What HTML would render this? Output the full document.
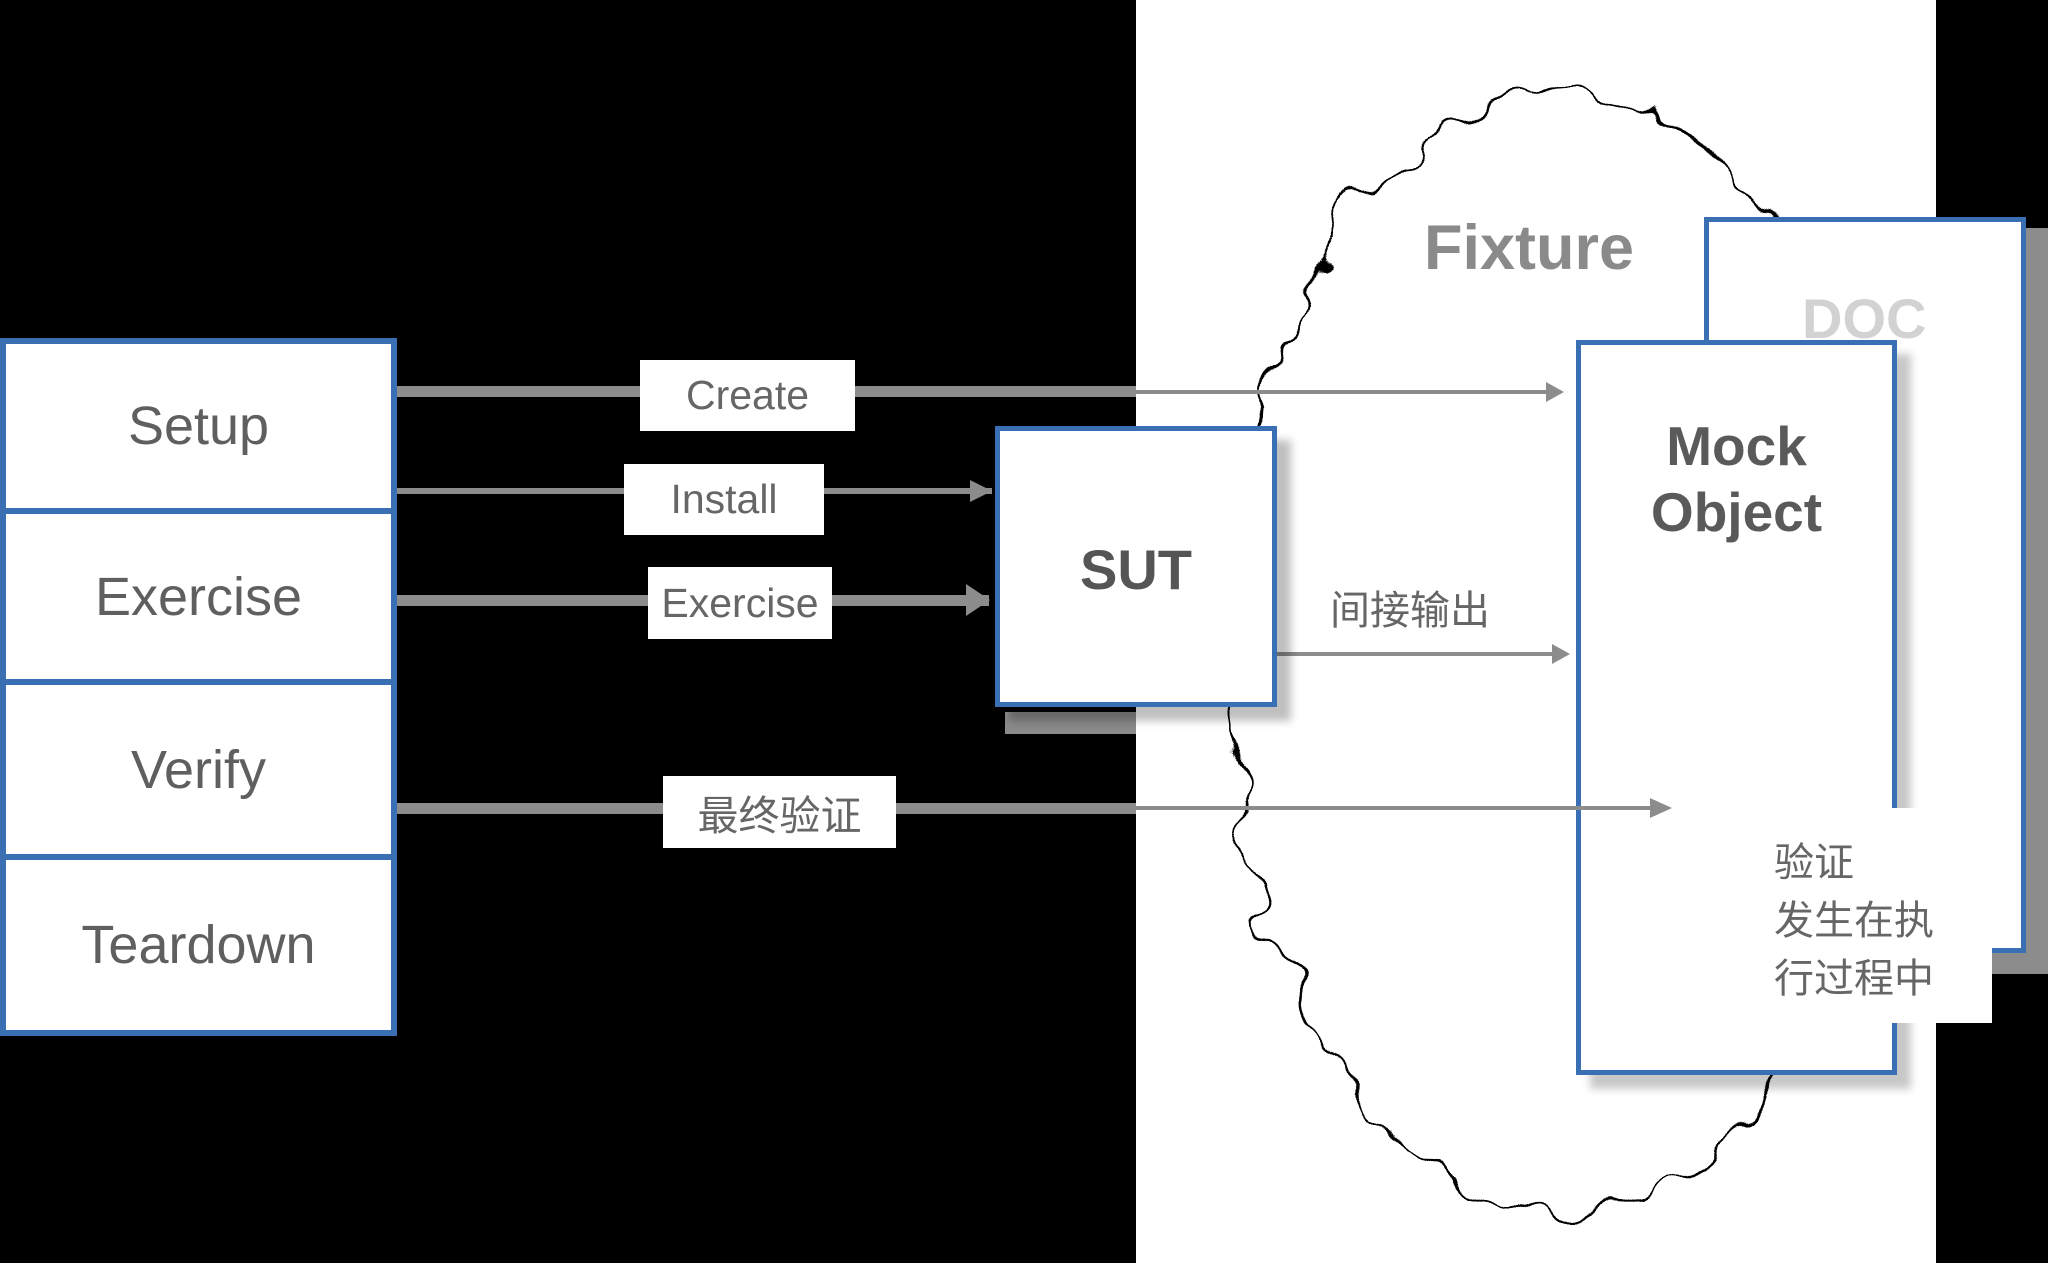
<!DOCTYPE html>
<html><head><meta charset="utf-8"><style>
body{margin:0;width:2048px;height:1263px;background:#000;position:relative;overflow:hidden;font-family:"Liberation Sans","Noto Sans CJK SC",sans-serif;}
.a{position:absolute;}
.lbl{position:absolute;background:#fff;color:#666;display:flex;align-items:center;justify-content:center;}
.cell{position:absolute;left:0;width:397px;background:#fff;color:#5f5f5f;font-size:54px;display:flex;align-items:center;justify-content:center;box-sizing:border-box;}
</style></head><body>
<div class="a" style="left:1136px;top:0;width:800px;height:1263px;background:#fff"></div>
<svg class="a" style="left:0;top:0" width="2048" height="1263">
<defs>
<filter id="w" x="-20%" y="-20%" width="140%" height="140%">
<feTurbulence type="fractalNoise" baseFrequency="0.022" numOctaves="2" seed="7"/>
<feDisplacementMap in="SourceGraphic" scale="60" xChannelSelector="R" yChannelSelector="G"/>
</filter>
</defs>
<ellipse cx="1560" cy="650" rx="330" ry="560" fill="none" stroke="#000" stroke-width="3" filter="url(#w)"/>
</svg>
<!-- left box -->
<div class="a" style="left:0;top:338px;width:397px;height:698px;background:#3a70b3"></div>
<div class="cell" style="top:344px;height:164px;left:6px;width:385px">Setup</div>
<div class="cell" style="top:514px;height:165px;left:6px;width:385px">Exercise</div>
<div class="cell" style="top:685px;height:169px;left:6px;width:385px">Verify</div>
<div class="cell" style="top:860px;height:170px;left:6px;width:385px">Teardown</div>
<svg class="a" style="left:0;top:0" width="2048" height="1263">
<g fill="#8c8c8c">
<rect x="397" y="386" width="739" height="11"/>
<rect x="1136" y="390" width="420" height="4"/>
<polygon points="1546,382 1564,392 1546,402"/>
<rect x="397" y="488" width="595" height="6"/>
<polygon points="970,480 992,491 970,502"/>
<rect x="397" y="595" width="592" height="11"/>
<polygon points="966,584 990,600 966,616"/>
<rect x="397" y="803" width="739" height="11"/>
<rect x="1136" y="806" width="530" height="4"/>
<rect x="1277" y="652" width="278" height="4"/>
<polygon points="1552,644 1570,654 1552,664"/>
</g>
<rect x="1005" y="712" width="131" height="22" fill="#8a8a8a"/>
</svg>
<div class="lbl" style="left:640px;top:360px;width:215px;height:71px;font-size:41px">Create</div>
<div class="lbl" style="left:624px;top:464px;width:200px;height:71px;font-size:41px">Install</div>
<div class="lbl" style="left:648px;top:567px;width:184px;height:72px;font-size:41px">Exercise</div>
<div class="lbl" style="left:663px;top:776px;width:233px;height:72px;font-size:41px">最终验证</div>
<!-- SUT -->
<div class="a" style="left:995px;top:426px;width:282px;height:281px;box-sizing:border-box;border:5px solid #3a70b3;background:#fff;box-shadow:14px 14px 8px rgba(0,0,0,0.25);display:flex;justify-content:center;padding-top:106px;font-weight:bold;font-size:56px;color:#555">SUT</div>
<div class="a" style="left:1330px;top:578px;font-size:40px;color:#666">间接输出</div>
<div class="a" style="left:1424px;top:212px;font-size:63px;font-weight:bold;color:#8a8a8a">Fixture</div>
<!-- DOC -->
<div class="a" style="left:1728px;top:228px;width:320px;height:746px;background:#8c8c8c"></div>
<div class="a" style="left:1704px;top:217px;width:322px;height:736px;box-sizing:border-box;border:5px solid #3a70b3;background:#fff"></div>
<div class="a" style="left:1802px;top:286px;font-size:56px;font-weight:bold;color:#d2d2d2">DOC</div>
<!-- Mock -->
<div class="a" style="left:1576px;top:340px;width:321px;height:735px;box-sizing:border-box;border:5px solid #3a70b3;background:#fff;box-shadow:14px 14px 8px rgba(0,0,0,0.22);text-align:center;padding-top:68px;font-weight:bold;font-size:55px;line-height:66px;color:#5a5a5a">Mock<br>Object</div>
<div class="a" style="left:1677px;top:808px;width:315px;height:215px;background:#fff"></div>
<svg class="a" style="left:0;top:0" width="2048" height="1263">
<g fill="#8c8c8c">
<rect x="1570" y="806" width="90" height="4"/>
<polygon points="1650,798 1672,808 1650,818"/>
</g>
</svg>
<div class="a" style="left:1774px;top:834px;font-size:40px;line-height:58px;color:#666">验证<br>发生在执<br>行过程中</div>
</body></html>
